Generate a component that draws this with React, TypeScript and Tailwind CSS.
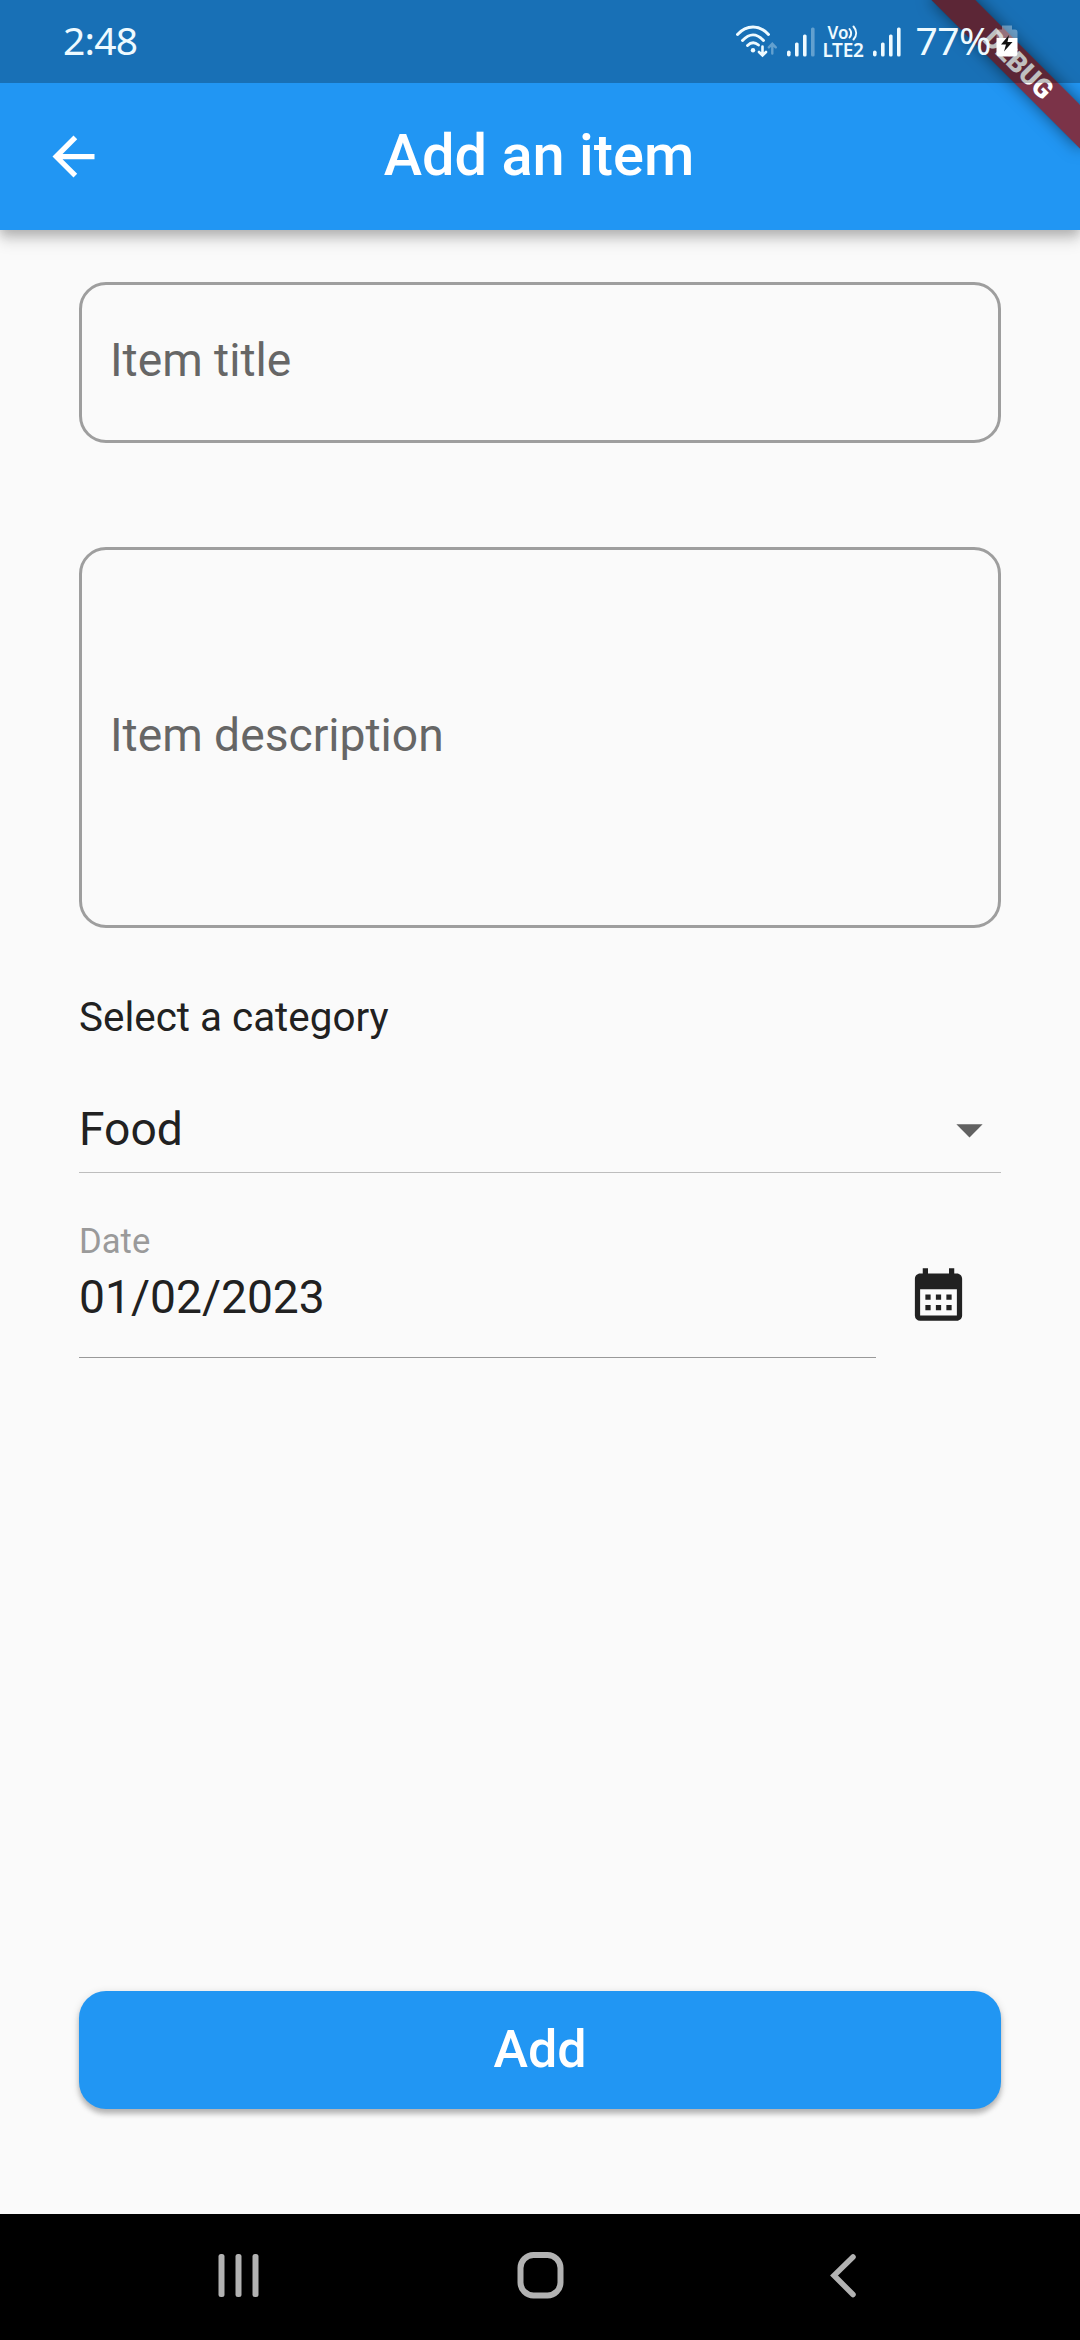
import { MdArrowBack, MdArrowDropDown, MdCalendarMonth } from "react-icons/md";

function WifiIcon() {
  return (
    <svg width="44" height="34" viewBox="0 0 44 34" fill="none" stroke="currentColor" strokeLinecap="round">
      <path d="M1.5 9.5C10.500 -0.500 23.500 -0.500 32.500 9.500" strokeWidth="2.900" />
      <path d="M6.500 15.500C13.500 8 20.500 8 27.500 15.500" strokeWidth="2.900" />
      <path d="M11.500 20.500C15 17 19 17 22.500 20" strokeWidth="2.900" />
      <circle cx="17" cy="25.300" r="2.200" fill="currentColor" stroke="none" />
      <path d="M26.500 21.500V30M23 27l3.500 3.500 3.500-3.500" strokeWidth="2.600" />
      <path d="M36.300 28.500V19M32.800 22.300l3.500-3.500 3.500 3.500" strokeWidth="2.400" opacity="0.35" />
    </svg>
  );
}

function SignalIcon({ weak = false }: { weak?: boolean }) {
  return (
    <svg width="28" height="30" viewBox="0 0 28 30" fill="currentColor">
      <rect x="0" y="23.500" width="3.600" height="6" rx="1.800" />
      <rect x="8" y="15.500" width="3.600" height="14" rx="1.500" />
      <rect x="16" y="7.500" width="3.600" height="22" rx="1.500" />
      <rect x="24" y="0.500" width="3.600" height="29" rx="1.500" opacity={weak ? 0.35 : 1} />
    </svg>
  );
}

function BatteryIcon() {
  return (
    <svg width="22" height="32" viewBox="0 0 22 32">
      <path d="M6 0.500h10v4h3a2.500 2.500 0 0 1 2.500 2.500v6h-21V7A2.500 2.500 0 0 1 3 4.500h3z" fill="#fff" opacity="0.35" />
      <path d="M0.500 13h21v15a3.500 3.500 0 0 1-3.500 3.500H4A3.500 3.500 0 0 1 .5 28z" fill="#fff" />
      <path d="M13 10L5 19.500h5L8 26.500 16.500 17H11.500z" fill="#111" />
    </svg>
  );
}

function StatusBar() {
  return (
    <div className="absolute inset-x-0 top-0 flex h-[83px] items-start bg-black/25 pl-[63px] font-['Noto_Sans',sans-serif] text-[#eefaff]">
      <span className="mt-[13px] text-[39px] leading-[54px] tracking-[-0.8px]">2:48</span>
      <div className="ml-auto flex items-start pr-[62px]">
        <span className="mt-[25px]"><WifiIcon /></span>
        <span className="mt-[27px] ml-[7px]"><SignalIcon weak /></span>
        <div className="mt-[25px] ml-[6px] flex w-[43px] flex-col items-center font-semibold">
          <span className="flex items-center text-[17px] leading-[16px]">
            Vo
            <svg width="10" height="16" viewBox="0 0 10 16" fill="none" stroke="currentColor" strokeWidth="2" strokeLinecap="round">
              <path d="M1.500 4c2 2.500 2 6 0 8.500M5.500 1.500c3.500 4 3.500 9 0 13" />
            </svg>
          </span>
          <span className="text-[19px] leading-[19px] tracking-[-0.3px]">LTE2</span>
        </div>
        <span className="mt-[27px] ml-[9px]"><SignalIcon /></span>
        <span className="mt-[13px] ml-[14px] text-[39px] leading-[54px] tracking-[-0.5px]">77%</span>
        <span className="mt-[25px] ml-[5px]"><BatteryIcon /></span>
      </div>
    </div>
  );
}

function DebugBanner() {
  return (
    <div className="absolute top-0 left-full h-0 w-0 rotate-45">
      <div className="absolute top-[73.5px] left-[-105px] flex h-[31.5px] w-[210px] items-center justify-center bg-[#b71c1c]/63 pl-[4px] text-[26.8px] leading-none font-black text-white shadow-[0_0_16px_rgba(0,0,0,0.5)] before:absolute before:inset-0 before:-z-10 before:bg-black/40">
        DEBUG
      </div>
    </div>
  );
}

function NavigationBar() {
  return (
    <nav className="flex h-[126px] items-center bg-black pb-[3px] text-[#b2b2b2]">
      <svg className="ml-[218px]" width="41" height="44" viewBox="0 0 41 44" fill="currentColor">
        <rect x="0.500" width="6" height="43" rx="2.500" />
        <rect x="17.500" width="6" height="43" rx="2.500" />
        <rect x="34.500" width="6" height="43" rx="2.500" />
      </svg>
      <svg className="ml-[258px]" width="47" height="47" viewBox="0 0 47 47" fill="none" stroke="currentColor" strokeWidth="6">
        <rect x="3.500" y="3" width="40" height="40.500" rx="13" />
      </svg>
      <svg className="ml-[265px]" width="28" height="44" viewBox="0 0 28 44" fill="none" stroke="currentColor" strokeWidth="5.500" strokeLinecap="round">
        <path d="M24 3L5 21.500 24 40.500" />
      </svg>
    </nav>
  );
}

export default function App() {
  return (
    <div className="relative flex h-[2340px] w-[1080px] flex-col overflow-hidden bg-[#fafafa] font-[Roboto,sans-serif] text-[#212121]">
      <header className="relative flex h-[230px] shrink-0 items-center bg-[#2196f3] px-[42px] pt-[83px] text-white shadow-[0_10px_14px_rgba(0,0,0,0.17),0_4px_10px_rgba(0,0,0,0.16)]">
        <MdArrowBack size={63} />
        <h1 className="mr-[63px] flex-1 pr-[2px] pb-[3px] text-center text-[57.75px] leading-[68px] font-medium">Add an item</h1>
      </header>

      <main className="flex flex-1 flex-col px-[79px] pt-[52px]">
        <div className="flex h-[161px] items-center rounded-[27px] border-3 border-[#9e9e9e] px-[28px] pb-[4px] text-[46.2px] text-[#666]">Item title</div>
        <div className="mt-[104px] flex h-[381px] items-center rounded-[27px] border-3 border-[#9e9e9e] px-[28px] pb-[3px] text-[46.2px] text-[#666]">Item description</div>

        <div className="mt-[66px] text-[40.4px] leading-[48px]">Select a category</div>
        <div className="mt-[45px] flex h-[86px] items-center justify-between border-b border-[#bdbdbd] text-[46.2px]">
          <span>Food</span>
          <MdArrowDropDown size={63} className="text-[#616161]" />
        </div>

        <div className="mt-[48px] flex items-start">
          <div className="flex h-[137px] w-[797px] flex-col border-b border-[#999]">
            <span className="text-[34.65px] leading-[40px] text-[#9a9a9a]">Date</span>
            <span className="mt-[9px] text-[46.2px] leading-[54px]">01/02/2023</span>
          </div>
          <MdCalendarMonth size={63} className="mt-[42px] ml-[31px]" />
        </div>

        <button className="mt-auto mb-[105px] h-[118px] rounded-[27px] bg-[#2196f3] text-[52px] font-medium text-white shadow-[0_5px_5px_rgba(0,0,0,0.2),0_2px_8px_rgba(0,0,0,0.15)]">Add</button>
      </main>

      <NavigationBar />
      <DebugBanner />
      <StatusBar />
    </div>
  );
}
